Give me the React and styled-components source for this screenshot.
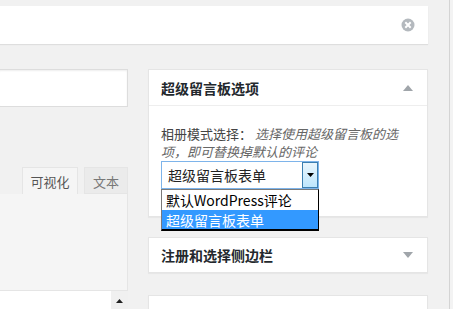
import React from "react";
import styled, { createGlobalStyle } from "styled-components";

const Global = createGlobalStyle`
  html, body { margin: 0; padding: 0; background: #f1f1f1; }
  body { font-family: "Noto Sans CJK SC", "Noto Sans", sans-serif; color: #444; }
  * { box-sizing: border-box; }
`;

const Page = styled.div`
  display: flex;
  width: 453px;
  height: 309px;
  overflow: hidden;
  background: #f1f1f1;
`;

const Main = styled.div`
  width: 449px;
  flex: none;
  padding-top: 6px;
`;

const Rail = styled.div`
  flex: 1;
  border-left: 1px solid #d4d4d4;
  background: #f3f3f3;
`;

const Notice = styled.div`
  width: 428px;
  height: 38px;
  background: #fff;
  box-shadow: 0 1px 1px rgba(0, 0, 0, 0.08);
  display: flex;
  align-items: center;
  justify-content: flex-end;
  padding-right: 13px;
`;

const Columns = styled.div`
  display: flex;
  gap: 20px;
  margin-top: 25px;
  width: 428px;
`;

const LeftCol = styled.div`
  width: 128px;
  flex: none;
  display: flex;
  flex-direction: column;
`;

const TitleInput = styled.div`
  height: 38px;
  margin-left: -2px;
  width: 130px;
  background: #fff;
  border: 1px solid #ddd;
  box-shadow: inset 0 1px 2px rgba(0, 0, 0, 0.07);
`;

const Tabs = styled.div`
  margin-top: 60px;
  display: flex;
  justify-content: flex-end;
  gap: 6px;
  height: 27px;
`;

const Tab = styled.div`
  width: ${(p) => p.$w}px;
  height: 27px;
  display: flex;
  align-items: center;
  justify-content: center;
  font-size: 13px;
  line-height: 1;
  color: ${(p) => (p.$active ? "#555" : "#777")};
  background: ${(p) => (p.$active ? "#f5f5f5" : "#ebebeb")};
  border: 1px solid #e5e5e5;
  border-bottom: ${(p) => (p.$active ? "none" : "1px solid #e5e5e5")};
  padding-top: 1px;
`;

const Toolbar = styled.div`
  height: 97px;
  background: #f5f5f5;
  border-right: 1px solid #e5e5e5;
  border-bottom: 1px solid #e5e5e5;
`;

const TextArea = styled.div`
  height: 20px;
  background: #fff;
  display: flex;
  justify-content: flex-end;
`;

const ScrollTrack = styled.div`
  width: 17px;
  background: #f0f0f0;
  display: flex;
  justify-content: center;
  padding-top: 8px;
`;

const RightCol = styled.div`
  width: 280px;
  flex: none;
  display: flex;
  flex-direction: column;
`;

const Postbox = styled.div`
  background: #fff;
  border: 1px solid #e5e5e5;
  box-shadow: 0 1px 1px rgba(0, 0, 0, 0.04);
  margin-top: ${(p) => p.$mt || 0}px;
  min-height: ${(p) => p.$minh || 0}px;
`;

const Hndle = styled.div`
  height: ${(p) => p.$h}px;
  display: flex;
  align-items: center;
  justify-content: space-between;
  padding: 0 14px 0 12px;
  border-bottom: ${(p) => (p.$open ? "1px solid #eee" : "none")};
`;

const Title = styled.h2`
  margin: 0;
  font-size: 14px;
  font-weight: 700;
  line-height: 1;
  color: #23282d;
`;

const Inside = styled.div`
  padding: 0 12px 27px;
`;

const Para = styled.p`
  margin: 19px 0 0;
  font-size: 13px;
  line-height: 18px;
  color: #444;
`;

const Desc = styled.span`
  font-style: italic;
  color: #666;
`;

const SelectWrap = styled.div`
  position: relative;
  width: 158px;
`;

const Select = styled.div`
  height: 28px;
  border: 1px solid #7eb4ea;
  background: #fff;
  display: flex;
  align-items: stretch;
`;

const SelectText = styled.span`
  flex: 1;
  display: flex;
  align-items: center;
  padding-left: 6px;
  font-size: 14px;
  line-height: 1;
  color: #222;
`;

const ArrowButton = styled.span`
  width: 16px;
  border: 1px solid #3c7fb1;
  background: linear-gradient(#eaf6fd, #bee6fd);
  display: flex;
  align-items: center;
  justify-content: center;
`;

const Dropdown = styled.div`
  position: absolute;
  top: 100%;
  left: 0;
  width: 158px;
  background: #fff;
  border: 1px solid #7a7a7a;
  border-right-color: #000;
  border-bottom: 2px solid #000;
  z-index: 2;
`;

const Option = styled.div`
  height: ${(p) => p.$h}px;
  display: flex;
  align-items: center;
  padding-left: 4px;
  font-size: 14px;
  line-height: 1;
  color: ${(p) => (p.$selected ? "#fff" : "#000")};
  background: ${(p) => (p.$selected ? "#3399ff" : "#fff")};
`;

const Triangle = ({ up, color = "#a0a5aa" }) => (
  <svg width="10" height="6" viewBox="0 0 10 6">
    <path d={up ? "M0 6 L5 0 L10 6 Z" : "M0 0 L5 6 L10 0 Z"} fill={color} />
  </svg>
);

const CloseIcon = () => (
  <svg width="14" height="14" viewBox="0 0 14 14">
    <circle cx="7" cy="7" r="6.5" fill="#b4b9be" />
    <path d="M4.3 4.3 L9.7 9.7 M9.7 4.3 L4.3 9.7" stroke="#fff" strokeWidth="2" />
  </svg>
);

export default function App() {
  return (
    <>
      <Global />
      <Page>
        <Main>
          <Notice>
            <CloseIcon />
          </Notice>
          <Columns>
            <LeftCol>
              <TitleInput />
              <Tabs>
                <Tab $w={56} $active>可视化</Tab>
                <Tab $w={44}>文本</Tab>
              </Tabs>
              <Toolbar />
              <TextArea>
                <ScrollTrack>
                  <svg width="7" height="4" viewBox="0 0 7 4">
                    <path d="M0 4 L3.5 0 L7 4 Z" fill="#222" />
                  </svg>
                </ScrollTrack>
              </TextArea>
            </LeftCol>
            <RightCol>
              <Postbox>
                <Hndle $h={36} $open>
                  <Title>超级留言板选项</Title>
                  <Triangle up />
                </Hndle>
                <Inside>
                  <Para>
                    相册模式选择： <Desc>选择使用超级留言板的选项，即可替换掉默认的评论</Desc>
                  </Para>
                  <SelectWrap>
                    <Select>
                      <SelectText>超级留言板表单</SelectText>
                      <ArrowButton>
                        <svg width="7" height="4" viewBox="0 0 7 4">
                          <path d="M0 0 L3.5 4 L7 0 Z" fill="#000" />
                        </svg>
                      </ArrowButton>
                    </Select>
                    <Dropdown>
                      <Option $h={20}>默认WordPress评论</Option>
                      <Option $h={19} $selected>超级留言板表单</Option>
                    </Dropdown>
                  </SelectWrap>
                </Inside>
              </Postbox>
              <Postbox $mt={20}>
                <Hndle $h={34}>
                  <Title>注册和选择侧边栏</Title>
                  <Triangle />
                </Hndle>
              </Postbox>
              <Postbox $mt={22} $minh={40} />
            </RightCol>
          </Columns>
        </Main>
        <Rail />
      </Page>
    </>
  );
}
